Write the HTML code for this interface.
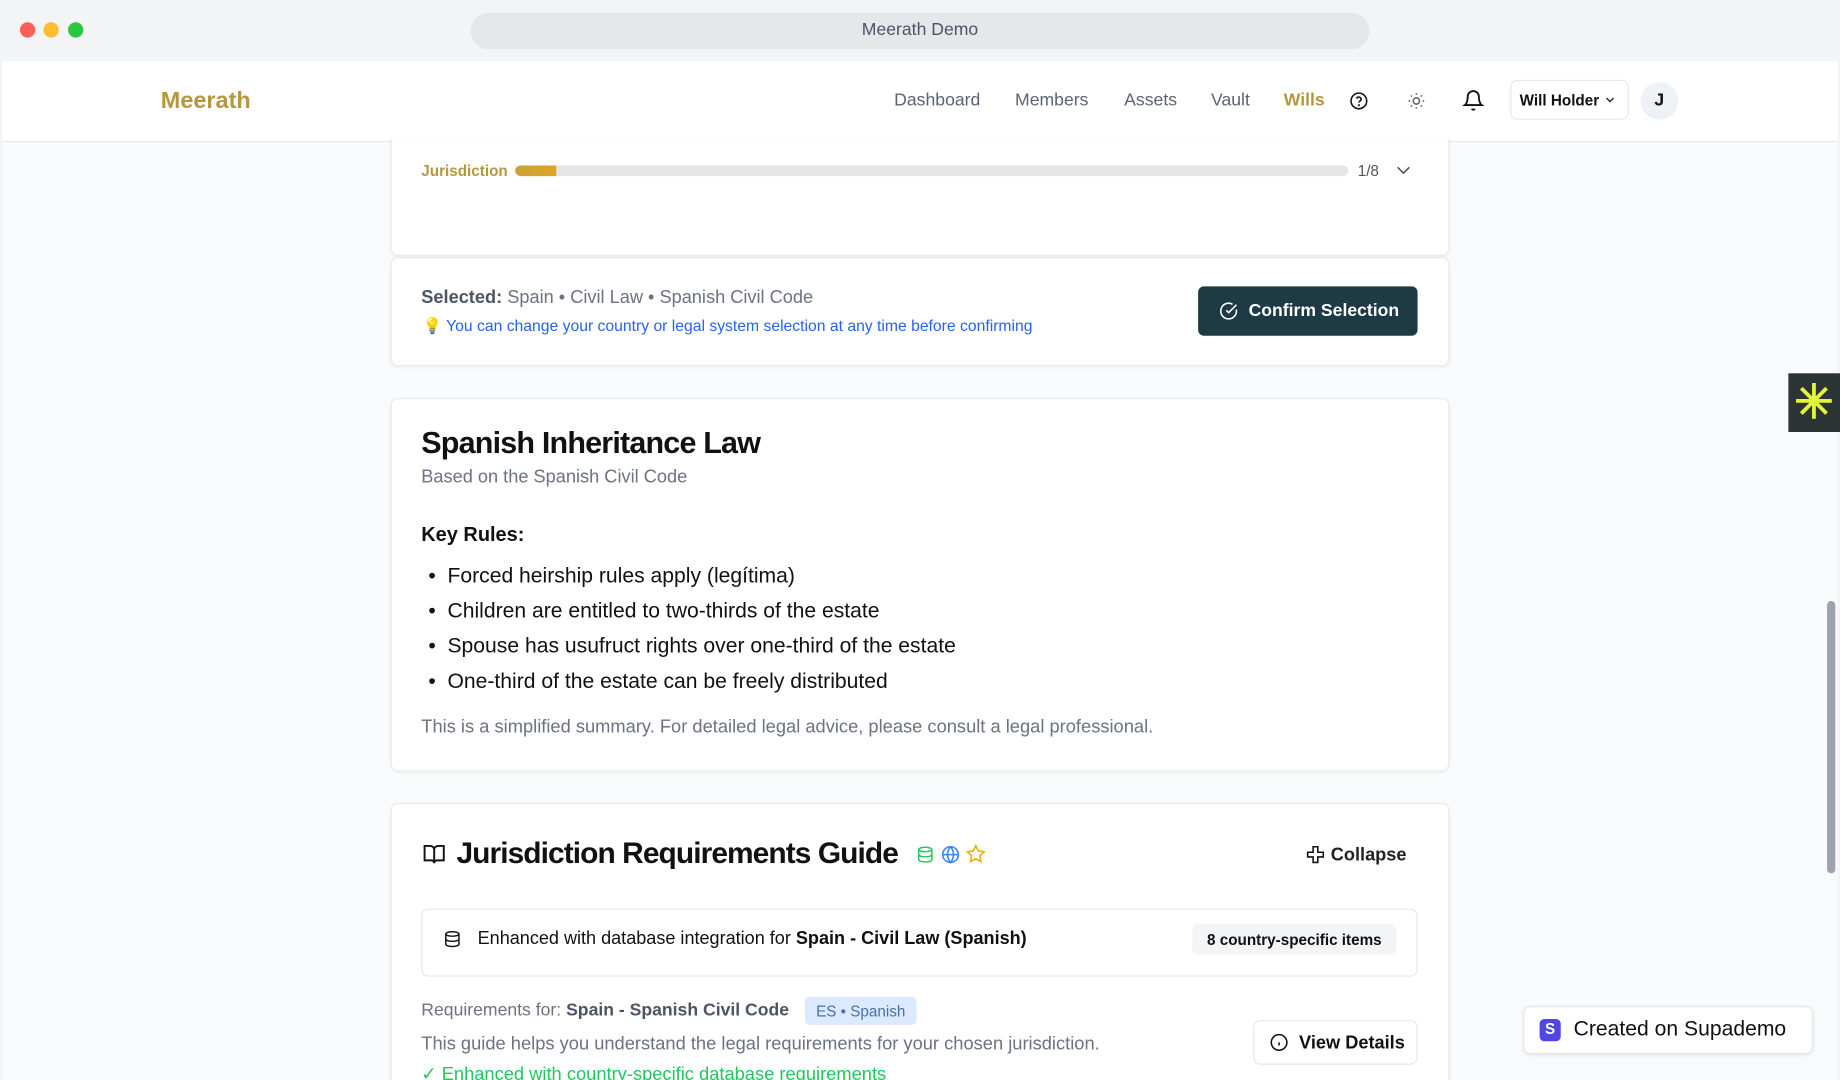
<!DOCTYPE html>
<html><head><meta charset="utf-8"><style>
*{box-sizing:border-box;margin:0;padding:0}
html,body{width:1840px;height:1080px;overflow:hidden;background:#fff;font-family:"Liberation Sans",sans-serif}
#w{position:absolute;left:0;top:0;width:1568px;height:920px;transform:scale(1.17347,1.1739);transform-origin:0 0;background:#f3f4f6;overflow:hidden}
.a{position:absolute}
.t{position:absolute;white-space:nowrap}
.card{position:absolute;left:333px;width:902px;background:#fff;border:1px solid #e9eaec;border-radius:6px;box-shadow:0 1px 3px rgba(0,0,0,.05)}
.nav{font-size:15px;color:#5b6472;top:77px}
svg{position:absolute;overflow:visible}
</style></head><body><div id="w">
<div class="a" style="left:17px;top:19px;width:13px;height:13px;border-radius:50%;background:#fe5f57"></div>
<div class="a" style="left:37px;top:19px;width:13px;height:13px;border-radius:50%;background:#febc2e"></div>
<div class="a" style="left:58px;top:19px;width:13px;height:13px;border-radius:50%;background:#28c840"></div>
<div class="a" style="left:401px;top:11px;width:766px;height:31px;border-radius:16px;background:#e5e7eb"></div>
<div class="t" style="left:401px;width:766px;text-align:center;top:17px;font-size:15px;color:#4b5563">Meerath Demo</div>
<div class="a" style="left:2px;top:52px;width:1564px;height:868px;background:#f9fafb"></div>
<div class="a" style="left:2px;top:52px;width:1564px;height:69px;background:#fff;border-bottom:1px solid #e5e7eb"></div>
<div class="t" style="left:137px;top:75px;font-size:20px;font-weight:bold;color:#b8963e">Meerath</div>
<div class="t nav" style="left:762px">Dashboard</div>
<div class="t nav" style="left:865px">Members</div>
<div class="t nav" style="left:958px">Assets</div>
<div class="t nav" style="left:1032px">Vault</div>
<div class="t nav" style="left:1094px;color:#b8963e;font-weight:bold">Wills</div>
<svg style="left:1150px;top:78px" width="16" height="16" viewBox="0 0 24 24" fill="none" stroke="#111" stroke-width="2"><circle cx="12" cy="12" r="10"/><path d="M9.1 9a3 3 0 0 1 5.8 1c0 2-3 2.5-3 4"/><circle cx="12" cy="17.5" r=".5"/></svg>
<svg style="left:1199px;top:78px" width="16" height="16" viewBox="0 0 24 24" fill="none" stroke="#666" stroke-width="2"><circle cx="12" cy="12" r="4"/><path d="M12 2v2M12 20v2M4.9 4.9l1.4 1.4M17.7 17.7l1.4 1.4M2 12h2M20 12h2M4.9 19.1l1.4-1.4M17.7 6.3l1.4-1.4"/></svg>
<svg style="left:1246px;top:76px" width="19" height="19" viewBox="0 0 24 24" fill="none" stroke="#111" stroke-width="2"><path d="M6 8a6 6 0 0 1 12 0c0 7 3 9 3 9H3s3-2 3-9"/><path d="M10.3 21a1.9 1.9 0 0 0 3.4 0"/></svg>
<div class="a" style="left:1287px;top:68px;width:101px;height:34px;border:1px solid #e5e7eb;border-radius:6px;background:#fff"></div>
<div class="t" style="left:1295px;top:78px;font-size:13px;font-weight:bold;color:#111">Will Holder</div>
<svg style="left:1368px;top:82px" width="8" height="6" viewBox="0 0 8 6" fill="none" stroke="#333" stroke-width="1.3"><path d="M1 1.5l3 3 3-3"/></svg>
<div class="a" style="left:1398px;top:70px;width:32px;height:32px;border-radius:50%;background:#eef2f7"></div>
<div class="t" style="left:1398px;width:32px;text-align:center;top:77px;font-size:15px;font-weight:bold;color:#111">J</div>
<div class="card" style="top:118px;height:100px;border-top:none;border-radius:0 0 6px 6px"></div>
<div class="t" style="left:359px;top:138px;font-size:13px;color:#b8963e;font-weight:bold">Jurisdiction</div>
<div class="a" style="left:439px;top:141px;width:710px;height:9px;border-radius:5px;background:#e5e5e5"></div>
<div class="a" style="left:439px;top:141px;width:35px;height:9px;border-radius:5px 0 0 5px;background:linear-gradient(90deg,#c9a23a,#e0a522)"></div>
<div class="t" style="left:1157px;top:138px;font-size:13px;color:#555">1/8</div>
<svg style="left:1190px;top:141px" width="12" height="8" viewBox="0 0 12 8" fill="none" stroke="#555" stroke-width="1.4"><path d="M1 1.5l5 5 5-5"/></svg>
<div class="card" style="top:219px;height:93px"></div>
<div class="t" style="left:359px;top:245px;font-size:15.5px;color:#6b7280"><b style="color:#4b5563">Selected:</b> Spain • Civil Law • Spanish Civil Code</div>
<div class="t" style="left:360px;top:270px;font-size:13.4px;color:#2563eb"><span style="color:#f3d36b">💡</span> You can change your country or legal system selection at any time before confirming</div>
<div class="a" style="left:1021px;top:244px;width:187px;height:42px;border-radius:5px;background:#1e3a45"></div>
<svg style="left:1039px;top:257px" width="16" height="16" viewBox="0 0 24 24" fill="none" stroke="#fff" stroke-width="2"><path d="M21.8 10A10 10 0 1 1 17 3.3"/><path d="M9 11l3 3L22 4"/></svg>
<div class="t" style="left:1064px;top:256px;font-size:15px;font-weight:bold;color:#fff">Confirm Selection</div>
<div class="card" style="top:339px;height:318px"></div>
<div class="t" style="left:359px;top:362px;font-size:26px;font-weight:bold;color:#111;letter-spacing:-.7px">Spanish Inheritance Law</div>
<div class="t" style="left:359px;top:398px;font-size:15.5px;color:#6b7280">Based on the Spanish Civil Code</div>
<div class="t" style="left:359px;top:446px;font-size:17px;font-weight:bold;color:#111">Key Rules:</div>
<div class="t" style="left:365px;top:475px;font-size:18px;color:#111;line-height:30px">• &nbsp;Forced heirship rules apply (legítima)<br>• &nbsp;Children are entitled to two-thirds of the estate<br>• &nbsp;Spouse has usufruct rights over one-third of the estate<br>• &nbsp;One-third of the estate can be freely distributed</div>
<div class="t" style="left:359px;top:611px;font-size:15.6px;color:#6b7280">This is a simplified summary. For detailed legal advice, please consult a legal professional.</div>
<div class="card" style="top:684px;height:250px"></div>
<svg style="left:360px;top:719px" width="20" height="18" viewBox="0 0 24 22" fill="none" stroke="#111" stroke-width="2"><path d="M2 2h6a4 4 0 0 1 4 4v14a3 3 0 0 0-3-3H2zM22 2h-6a4 4 0 0 0-4 4v14a3 3 0 0 1 3-3h7z"/></svg>
<div class="t" style="left:389px;top:713px;font-size:25.5px;font-weight:bold;color:#111;letter-spacing:-.8px">Jurisdiction Requirements Guide</div>
<svg style="left:781px;top:720px" width="15" height="16" viewBox="0 0 24 24" fill="none" stroke="#22c55e" stroke-width="2"><ellipse cx="12" cy="5" rx="9" ry="3"/><path d="M3 5v14c0 1.7 4 3 9 3s9-1.3 9-3V5M3 12c0 1.7 4 3 9 3s9-1.3 9-3"/></svg>
<svg style="left:802px;top:720px" width="16" height="16" viewBox="0 0 24 24" fill="none" stroke="#3b82f6" stroke-width="2"><circle cx="12" cy="12" r="10"/><path d="M2 12h20M12 2a15 15 0 0 1 0 20 15 15 0 0 1 0-20"/></svg>
<svg style="left:823px;top:719px" width="17" height="17" viewBox="0 0 24 24" fill="none" stroke="#eab308" stroke-width="2"><path d="M12 2l3.1 6.3 6.9 1-5 4.9 1.2 6.8L12 17.8 5.8 21l1.2-6.8-5-4.9 6.9-1z"/></svg>
<svg style="left:1113px;top:720px" width="16" height="16" viewBox="0 0 24 24" fill="none" stroke="#111" stroke-width="2"><path d="M9 2h6v7h7v6h-7v7H9v-7H2V9h7z"/></svg>
<div class="t" style="left:1134px;top:720px;font-size:15.5px;font-weight:bold;color:#222">Collapse</div>
<div class="a" style="left:359px;top:774px;width:849px;height:58px;border:1px solid #e5e7eb;border-radius:6px;background:#fff"></div>
<svg style="left:378px;top:792px" width="15" height="16" viewBox="0 0 24 24" fill="none" stroke="#111" stroke-width="2"><ellipse cx="12" cy="5" rx="9" ry="3"/><path d="M3 5v14c0 1.7 4 3 9 3s9-1.3 9-3V5M3 12c0 1.7 4 3 9 3s9-1.3 9-3"/></svg>
<div class="t" style="left:407px;top:791px;font-size:15.4px;color:#111">Enhanced with database integration for <b>Spain - Civil Law (Spanish)</b></div>
<div class="a" style="left:1016px;top:787px;width:174px;height:26px;border-radius:5px;background:#f3f4f6"></div>
<div class="t" style="left:1016px;width:174px;text-align:center;top:793px;font-size:13px;font-weight:bold;color:#111">8 country-specific items</div>
<div class="t" style="left:359px;top:852px;font-size:15px;color:#6b7280">Requirements for: <span style="color:#4b5563;font-weight:bold">Spain - Spanish Civil Code</span></div>
<div class="a" style="left:686px;top:849px;width:95px;height:24px;border-radius:4px;background:#dbeafe"></div>
<div class="t" style="left:686px;width:95px;text-align:center;top:854px;font-size:13px;color:#4b6fa8">ES • Spanish</div>
<div class="t" style="left:359px;top:881px;font-size:15.6px;color:#6b7280">This guide helps you understand the legal requirements for your chosen jurisdiction.</div>
<div class="t" style="left:359px;top:906px;font-size:15.6px;color:#22c55e">✓ Enhanced with country-specific database requirements</div>
<div class="a" style="left:1068px;top:869px;width:140px;height:38px;border:1px solid #e5e7eb;border-radius:6px;background:#fff"></div>
<svg style="left:1082px;top:880px" width="16" height="16" viewBox="0 0 24 24" fill="none" stroke="#111" stroke-width="2"><circle cx="12" cy="12" r="10"/><path d="M12 16v-4M12 8h.01"/></svg>
<div class="t" style="left:1107px;top:880px;font-size:15.5px;font-weight:bold;color:#111">View Details</div>
<div class="a" style="left:1557px;top:512px;width:7px;height:232px;border-radius:4px;background:#9ca3af"></div>
<div class="a" style="left:1524px;top:318px;width:44px;height:50px;background:#2d3436"></div>
<div class="t" style="left:1529px;top:318px;font-size:40px;line-height:50px;color:#e4f53b;font-weight:bold">✳</div>
<div class="a" style="left:1298px;top:857px;width:247px;height:41px;border:1px solid #e5e7eb;border-radius:6px;background:#fff;box-shadow:0 1px 3px rgba(0,0,0,.08)"></div>
<div class="a" style="left:1312px;top:868px;width:18px;height:19px;border-radius:4px;background:#4f46e5"></div>
<div class="t" style="left:1312px;width:18px;text-align:center;top:869px;font-size:13px;font-weight:bold;color:#fff">S</div>
<div class="t" style="left:1341px;top:866px;font-size:18px;color:#111">Created on Supademo</div>
</div></body></html>
